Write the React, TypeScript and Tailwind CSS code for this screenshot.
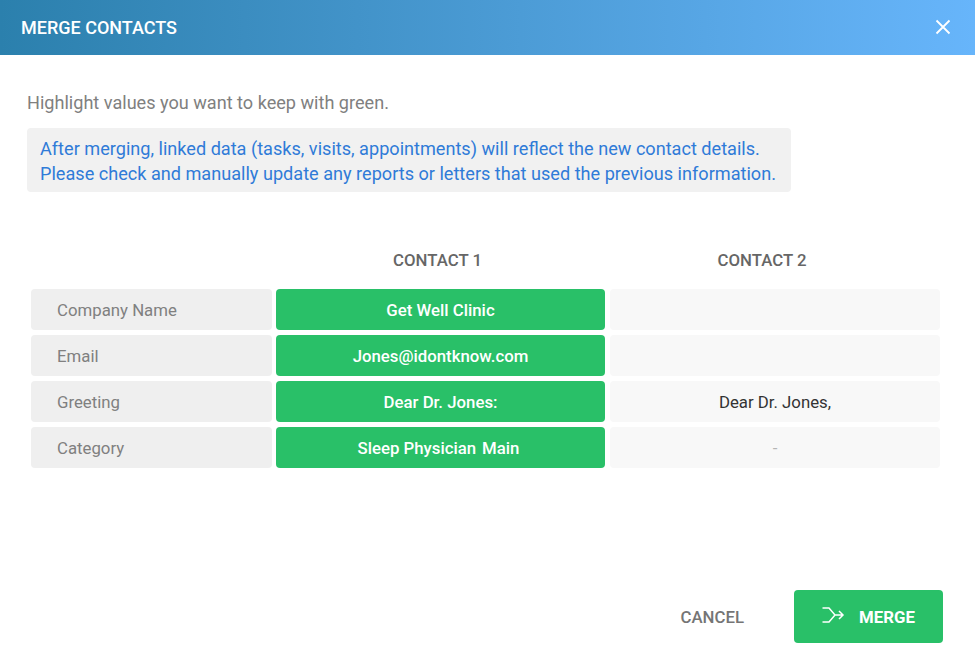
import React from "react";

const rows = [
  { label: "Company Name", a: "Get Well Clinic", b: "" },
  { label: "Email", a: "Jones@idontknow.com", b: "" },
  { label: "Greeting", a: "Dear Dr. Jones:", b: "Dear Dr. Jones," },
  { label: "Category", a: "Sleep Physician \u200aMain ", b: "-" },
];

export default function App() {
  return (
    <div className="w-[975px] h-[672px] bg-white flex flex-col overflow-hidden font-['Roboto',sans-serif]">
      <header className="h-[55px] shrink-0 flex items-center justify-between pl-[21px] pr-[23px] bg-gradient-to-r from-[#2b80ad] to-[#67b5fb]">
        <h1 className="text-white text-[18px] font-medium pb-[1px]">MERGE CONTACTS</h1>
        <svg width="18" height="18" viewBox="0 0 18 18" fill="none" stroke="white" strokeWidth="1.8" className="-mt-[2px]">
          <path d="M2.5 2.5 L15.5 15.5 M15.5 2.5 L2.5 15.5" />
        </svg>
      </header>

      <main className="flex-1 flex flex-col pl-[27px] pr-[32px]">
        <p className="mt-[38px] text-[18.1px] leading-[20px] text-[#808080]">Highlight values you want to keep with green.</p>
        <div className="mt-[15px] w-[764px] h-[64px] rounded bg-[#f1f1f1] px-[13px] py-[8px] text-[#2f7bd8] text-[18.12px] leading-[25px]">
          <div>After merging, linked data (tasks, visits, appointments) will reflect the new contact details.</div>
          <div>Please check and manually update any reports or letters that used the previous information.</div>
        </div>

        <div className="mt-[57px] ml-[4px] flex text-[16.8px] leading-[22px] font-medium text-[#666666]">
          <div className="w-[242px]" />
          <div className="w-[329px] text-center">CONTACT 1</div>
          <div className="w-[320px] text-center">CONTACT 2</div>
        </div>

        <div className="mt-[18px] ml-[4px] flex flex-col gap-[5px] text-[16.8px]">
          {rows.map((r) => (
            <div key={r.label} className="flex h-[41px] gap-[4px]">
              <div className="w-[241px] rounded bg-[#efefef] flex items-center pl-[26px] pt-[2px] text-[#808080]">{r.label}</div>
              <div className="w-[329px] rounded bg-[#29c068] flex items-center justify-center pt-[2px] text-white font-medium whitespace-pre">{r.a}</div>
              <div className={`ml-[1px] w-[330px] rounded bg-[#f8f8f8] flex items-center justify-center pt-[2px] ${r.b === "-" ? "text-[#b5b5b5]" : "text-[#333333]"}`}>{r.b}</div>
            </div>
          ))}
        </div>

        <div className="mt-[122px] flex items-center justify-end">
          <button className="text-[16.8px] font-medium text-[#757575] mr-[50px] pt-[2px]">CANCEL</button>
          <button className="w-[149px] h-[53px] rounded bg-[#29c068] flex items-center justify-center gap-[13px] text-white text-[16.8px] font-bold">
            <svg width="24" height="18" viewBox="0 0 24 18" fill="none" stroke="white" strokeWidth="1.5" className="-mt-[4px]">
              <path d="M0.5 2 H7 L13 9 L7 16 H0.5 M13 9 H21 M17 5 L21 9 L17 13" />
            </svg>
            <span className="pt-[2px]">MERGE</span>
          </button>
        </div>
      </main>
    </div>
  );
}
